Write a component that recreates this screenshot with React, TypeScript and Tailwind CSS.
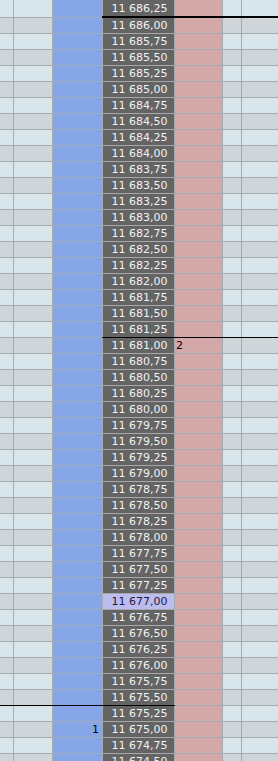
import React from 'react';

const TOP = 11686.25;
const ROWS = 48;

const fmt = (p: number) => {
    const [i, d] = p.toFixed(2).split('.');
    return i.replace(/\B(?=(\d{3})+(?!\d))/g, ' ') + ',' + d;
};

const Row = ({ k }: { k: number }) => {
    const price = TOP - k * 0.25;
    const even = k % 2 === 0;
    const side = even ? 'bg-[#d8e5eb]' : 'bg-[#d0d5da]';
    const hi = k === 37;
    return (
        <div
            className={`relative grid grid-cols-[14px_39px_50px_72px_48px_19px_36px] ${k === 0 ? 'h-[18px]' : 'h-4'}`}
        >
            <div className={`${side} border-r border-b border-[#a3acb2]`} />
            <div className={`${side} border-r border-b border-[#a3acb2]`} />
            <div className="bg-[#87a6e7] border-r border-b border-[#a3acb2] flex items-center justify-end pr-[3px] text-[11px] text-black">
                {k === 45 ? '1' : ''}
            </div>
            <div
                className={`${hi ? 'bg-[#bcbcee] text-[#1c1c3c]' : 'bg-[#646464] text-[#f2f2f2]'} border-r border-b border-[#a8a8a8] flex items-center justify-center text-[11px] pl-[2px] whitespace-nowrap`}
            >
                {fmt(price)}
            </div>
            <div className="bg-[#d4a7a8] border-r border-b border-[#a3acb2] flex items-center pl-[1px] text-[11px] text-black">
                {k === 21 ? '2' : ''}
            </div>
            <div className={`${side} border-r border-b border-[#a3acb2]`} />
            <div className={`${side} border-b border-[#a3acb2]`} />

            {/* marker lines */}
            {k === 0 && <div className="absolute left-[102px] right-0 bottom-0 h-[2px] bg-black" />}
            {k === 20 && <div className="absolute left-[102px] right-0 bottom-0 h-px bg-black" />}
            {k === 43 && <div className="absolute left-0 w-[175px] bottom-0 h-px bg-black" />}
        </div>
    );
};

export default function App() {
    return (
        <div
            className="w-[278px] h-[761px] overflow-hidden bg-[#d0d5da] leading-none"
            style={{ fontFamily: '"DejaVu Sans", sans-serif' }}
        >
            {Array.from({ length: ROWS }, (_, k) => (
                <Row key={k} k={k} />
            ))}
        </div>
    );
}
